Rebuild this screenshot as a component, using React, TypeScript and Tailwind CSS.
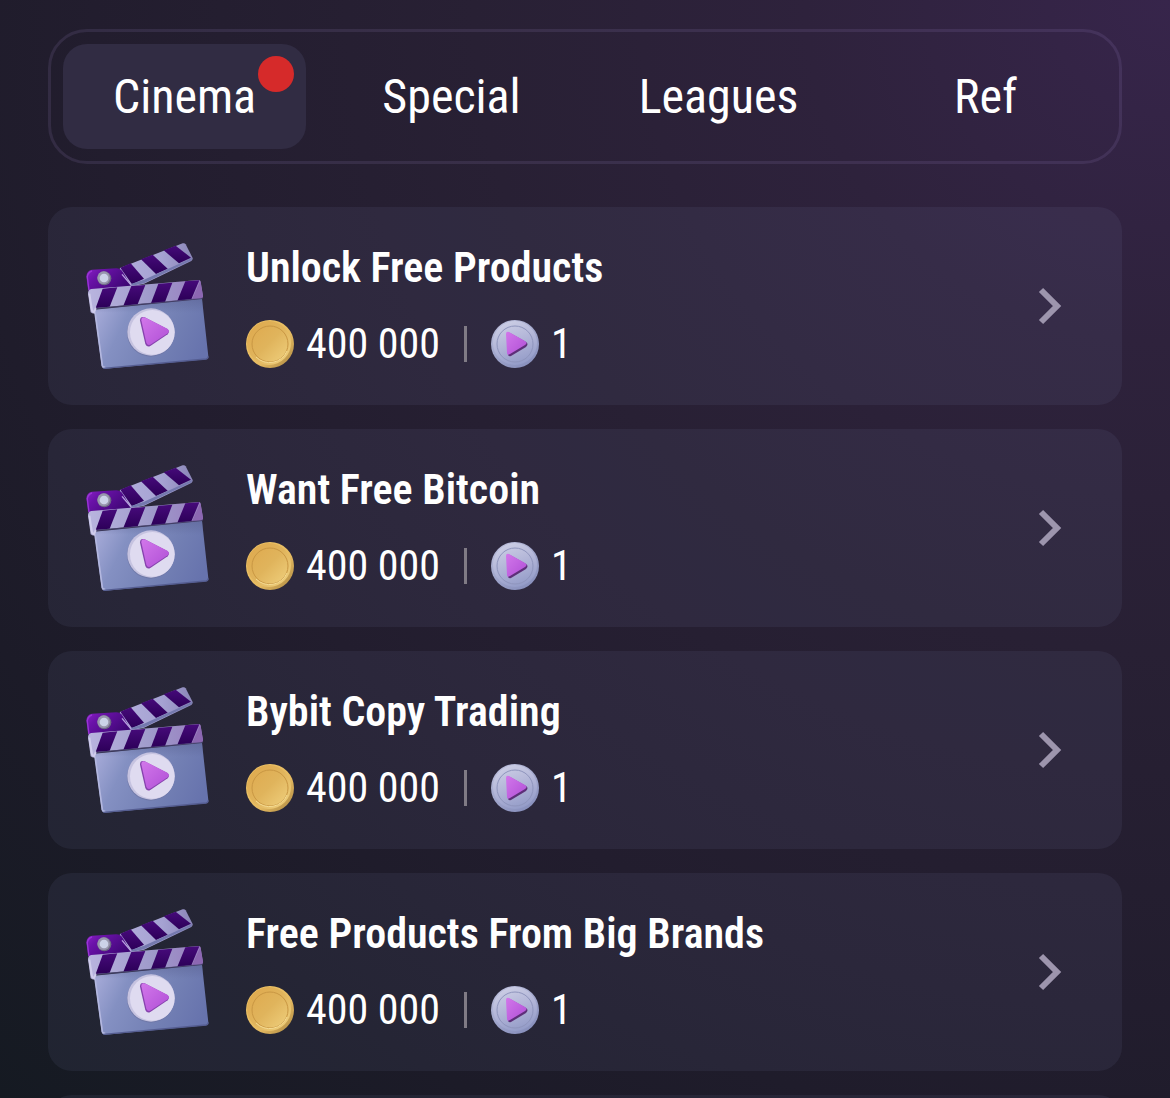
import { useState } from "react";

type Tab = {
  name: string;
  hasBadge?: boolean;
};

const tabs: Tab[] = [
  { name: "Cinema", hasBadge: true },
  { name: "Special" },
  { name: "Leagues" },
  { name: "Ref" },
];

const tasks = [
  { title: "Unlock Free Products", coins: "400 000", views: 1 },
  { title: "Want Free Bitcoin", coins: "400 000", views: 1 },
  { title: "Bybit Copy Trading", coins: "400 000", views: 1 },
  { title: "Free Products From Big Brands", coins: "400 000", views: 1 },
];

// shared gradients, referenced by id from every icon
const Gradients = () => (
  <svg className="absolute w-0 h-0" aria-hidden="true">
    <defs>
      <linearGradient id="board" x1="0" y1="0.3" x2="1" y2="0.6">
        <stop offset="0" stopColor="#a3a8d6" />
        <stop offset="0.25" stopColor="#8490c2" />
        <stop offset="0.65" stopColor="#7380b4" />
        <stop offset="1" stopColor="#6773ad" />
      </linearGradient>
      <linearGradient id="boardShade" x1="0" y1="0" x2="0" y2="1">
        <stop offset="0" stopColor="#5a6192" stopOpacity="0.5" />
        <stop offset="0.35" stopColor="#5a6192" stopOpacity="0" />
      </linearGradient>
      <linearGradient id="bar" x1="0" y1="0" x2="1" y2="0">
        <stop offset="0" stopColor="#b9b5df" />
        <stop offset="0.6" stopColor="#9d98c9" />
        <stop offset="1" stopColor="#9a7cc0" />
      </linearGradient>
      <linearGradient id="arm" x1="0" y1="0" x2="1" y2="0">
        <stop offset="0" stopColor="#b4b0dd" />
        <stop offset="0.6" stopColor="#a5a2d2" />
        <stop offset="1" stopColor="#8b86b8" />
      </linearGradient>
      <linearGradient id="stripe" x1="0" y1="0" x2="0" y2="1">
        <stop offset="0" stopColor="#460a7a" />
        <stop offset="1" stopColor="#2c0058" />
      </linearGradient>
      <linearGradient id="hinge" x1="0" y1="0" x2="1" y2="0.6">
        <stop offset="0" stopColor="#8a20c4" />
        <stop offset="0.3" stopColor="#6a12a8" />
        <stop offset="1" stopColor="#3c0672" />
      </linearGradient>
      <linearGradient id="play" x1="0" y1="0" x2="1" y2="1">
        <stop offset="0" stopColor="#d277ea" />
        <stop offset="1" stopColor="#b04fd6" />
      </linearGradient>
      <linearGradient id="gold" x1="0" y1="0" x2="1" y2="1">
        <stop offset="0" stopColor="#dfa84c" />
        <stop offset="0.5" stopColor="#e0b45c" />
        <stop offset="1" stopColor="#f2d482" />
      </linearGradient>
      <linearGradient id="goldEdge" x1="0" y1="0" x2="1" y2="1">
        <stop offset="0" stopColor="#efc667" />
        <stop offset="0.6" stopColor="#e6bb62" />
        <stop offset="1" stopColor="#a8843f" />
      </linearGradient>
      <linearGradient id="silver" x1="0.2" y1="0" x2="0.6" y2="1">
        <stop offset="0" stopColor="#ced0e6" />
        <stop offset="0.5" stopColor="#b3b6d8" />
        <stop offset="1" stopColor="#949cc8" />
      </linearGradient>
      <linearGradient id="silverEdge" x1="0.2" y1="0" x2="0.8" y2="1">
        <stop offset="0" stopColor="#bcbfdc" />
        <stop offset="1" stopColor="#858dbb" />
      </linearGradient>
    </defs>
  </svg>
);

const Clapperboard = () => (
  <svg viewBox="42 54 378 378" className="size-[126px] shrink-0" aria-hidden="true">
    {/* board */}
    <path
      d="M73 254L396 222L415 394Q416 402 408 403L106 431Q97 432 95 423Z"
      fill="url(#board)"
    />
    <path d="M73 254L396 222L406 310L82 340Z" fill="url(#boardShade)" />
    <path d="M75 262L97 422Q99 428 106 427" fill="none" stroke="#b3b7df" strokeWidth="5" />
    <path
      d="M100 430L408 402Q415 401 414 394"
      fill="none"
      stroke="#555d91"
      strokeWidth="4"
    />
    {/* upper arm */}
    <path
      d="M150 129L338 55Q344 53 347 58L368 99Q369 104 364 108L222 176L184 184L140 170Z"
      fill="url(#arm)"
    />
    <path d="M151 128L182 115L222 161L186 178Z" fill="url(#stripe)" />
    <path d="M213 103L248 89L293 131L258 147Z" fill="url(#stripe)" />
    <path d="M281 76L317 62L363 98L327 115Z" fill="url(#stripe)" />
    <path d="M184 183L222 175L364 106L366 99L222 164L182 177Z" fill="#7479ae" />
    {/* hinge */}
    <path
      d="M49 154Q50 137 66 134L139 130Q150 130 158 140L184 184L60 202L54 192Z"
      fill="url(#hinge)"
    />
    <path d="M57 196L52 156Q53 142 66 138" fill="none" stroke="#9a35d6" strokeWidth="4" />
    <path d="M156 148L184 181" stroke="#b9a2df" strokeWidth="4" />
    <circle cx="103" cy="160" r="21" fill="#6f6b86" />
    <circle cx="101" cy="158" r="19" fill="#9998ae" />
    <circle cx="102" cy="159" r="13" fill="#ccd3e8" />
    {/* lower bar */}
    <path
      d="M54 205Q54 194 64 192L387 165Q391 165 392 170L399 213Q399 219 394 220L77 249L70 266L62 262Z"
      fill="url(#bar)"
    />
    <path d="M98 191L142 187L119 245L77 249Z" fill="url(#stripe)" />
    <path d="M184 183L226 180L203 238L160 242Z" fill="url(#stripe)" />
    <path d="M265 176L307 173L285 231L243 235Z" fill="url(#stripe)" />
    <path d="M346 169L388 166L364 223L322 227Z" fill="url(#stripe)" />
    <path d="M391 168L399 213Q399 219 394 220L366 223Z" fill="#8c67b2" />
    <path d="M58 206L66 256L72 262L78 248" fill="none" stroke="#d0cdec" strokeWidth="6" />
    <path d="M78 251L398 220" stroke="#555085" strokeWidth="4" opacity="0.6" />
    {/* play disc */}
    <circle cx="242" cy="324" r="71" fill="#6a719f" opacity="0.6" />
    <circle cx="243" cy="321" r="71" fill="#c6c3e0" />
    <circle cx="247" cy="322" r="67" fill="#dfdbf0" />
    <path
      d="M210 287Q210 272 224 277L292 312Q301 319 293 328L241 363Q231 368 226 357Z"
      fill="#8642ad"
    />
    <path
      d="M214 286Q214 273 227 278L292 311Q301 318 293 325L243 358Q233 363 229 353Z"
      fill="url(#play)"
    />
  </svg>
);

const GoldCoin = () => (
  <svg viewBox="0 0 48 48" className="size-12 shrink-0" aria-hidden="true">
    <circle cx="24" cy="24" r="24" fill="url(#goldEdge)" />
    <circle cx="23" cy="23" r="22" fill="url(#gold)" />
    <circle cx="24" cy="24" r="18" fill="none" stroke="#c99743" strokeWidth="1" />
    <path d="M10 37A19 19 0 0 0 41 31" fill="none" stroke="#f5dc94" strokeWidth="1" />
  </svg>
);

const PlayCoin = () => (
  <svg viewBox="0 0 48 48" className="size-12 shrink-0" aria-hidden="true">
    <circle cx="24" cy="24" r="24" fill="url(#silverEdge)" />
    <circle cx="24" cy="23" r="22" fill="url(#silver)" />
    <circle cx="24" cy="24" r="18" fill="none" stroke="#8f95bd" strokeWidth="1" />
    <path
      d="M16 15Q16 12 19 13L35 22Q38 24 35 27L20 36Q17 37 17 34Z"
      fill="#5d2f78"
    />
    <path
      d="M15 14Q15 11 18 12L34 21Q37 23 34 25L19 34Q16 36 16 33Z"
      fill="url(#play)"
    />
  </svg>
);

const Chevron = () => (
  <svg viewBox="0 0 72 72" className="size-[72px] shrink-0" aria-hidden="true">
    <path d="M27 20L43 36L27 52" fill="none" stroke="#9d95ad" strokeWidth="6" />
  </svg>
);

export default function App() {
  const [activeTab, setActiveTab] = useState("Cinema");

  return (
    <div className="h-screen overflow-y-auto [scrollbar-width:none] text-white font-['Roboto_Condensed','Roboto',sans-serif] bg-[radial-gradient(ellipse_at_top_right,#37254b_0%,#2e223c_22%,#282034_42%,#221d2e_65%,#1c1b28_82%,#151a22_100%)]">
      <Gradients />
      <main className="px-12 pt-[29px]">
        <nav className="grid grid-cols-4 gap-6 rounded-[39px] border-3 border-[#b4a0e6]/12 p-3">
          {tabs.map((tab) => (
            <button
              key={tab.name}
              type="button"
              onClick={() => setActiveTab(tab.name)}
              className={`relative h-[105px] rounded-3xl text-5xl ${
                activeTab === tab.name ? "bg-[#312c43]" : ""
              }`}
            >
              {tab.name}
              {tab.hasBadge && (
                <span className="absolute top-3 right-3 size-9 rounded-full bg-[#d62a2a]" />
              )}
            </button>
          ))}
        </nav>

        <ul className="mt-[43px] flex flex-col gap-6">
          {tasks.map((task) => (
            <li key={task.title}>
              <button
                type="button"
                className="flex h-[198px] w-full items-center gap-9 rounded-3xl bg-[#96a0dc]/8 px-9 text-left"
              >
                <Clapperboard />
                <div className="flex flex-1 flex-col gap-7">
                  <span className="text-[42px] leading-12 font-semibold">{task.title}</span>
                  <div className="flex items-center gap-6 text-[42px] leading-12">
                    <span className="flex items-center gap-3">
                      <GoldCoin />
                      {task.coins}
                    </span>
                    <span className="h-9 w-[3px] bg-[#807b85]" />
                    <span className="flex items-center gap-3">
                      <PlayCoin />
                      {task.views}
                    </span>
                  </div>
                </div>
                <Chevron />
              </button>
            </li>
          ))}
          <li className="h-[198px] rounded-3xl bg-[#96a0dc]/8" />
        </ul>
      </main>
    </div>
  );
}
